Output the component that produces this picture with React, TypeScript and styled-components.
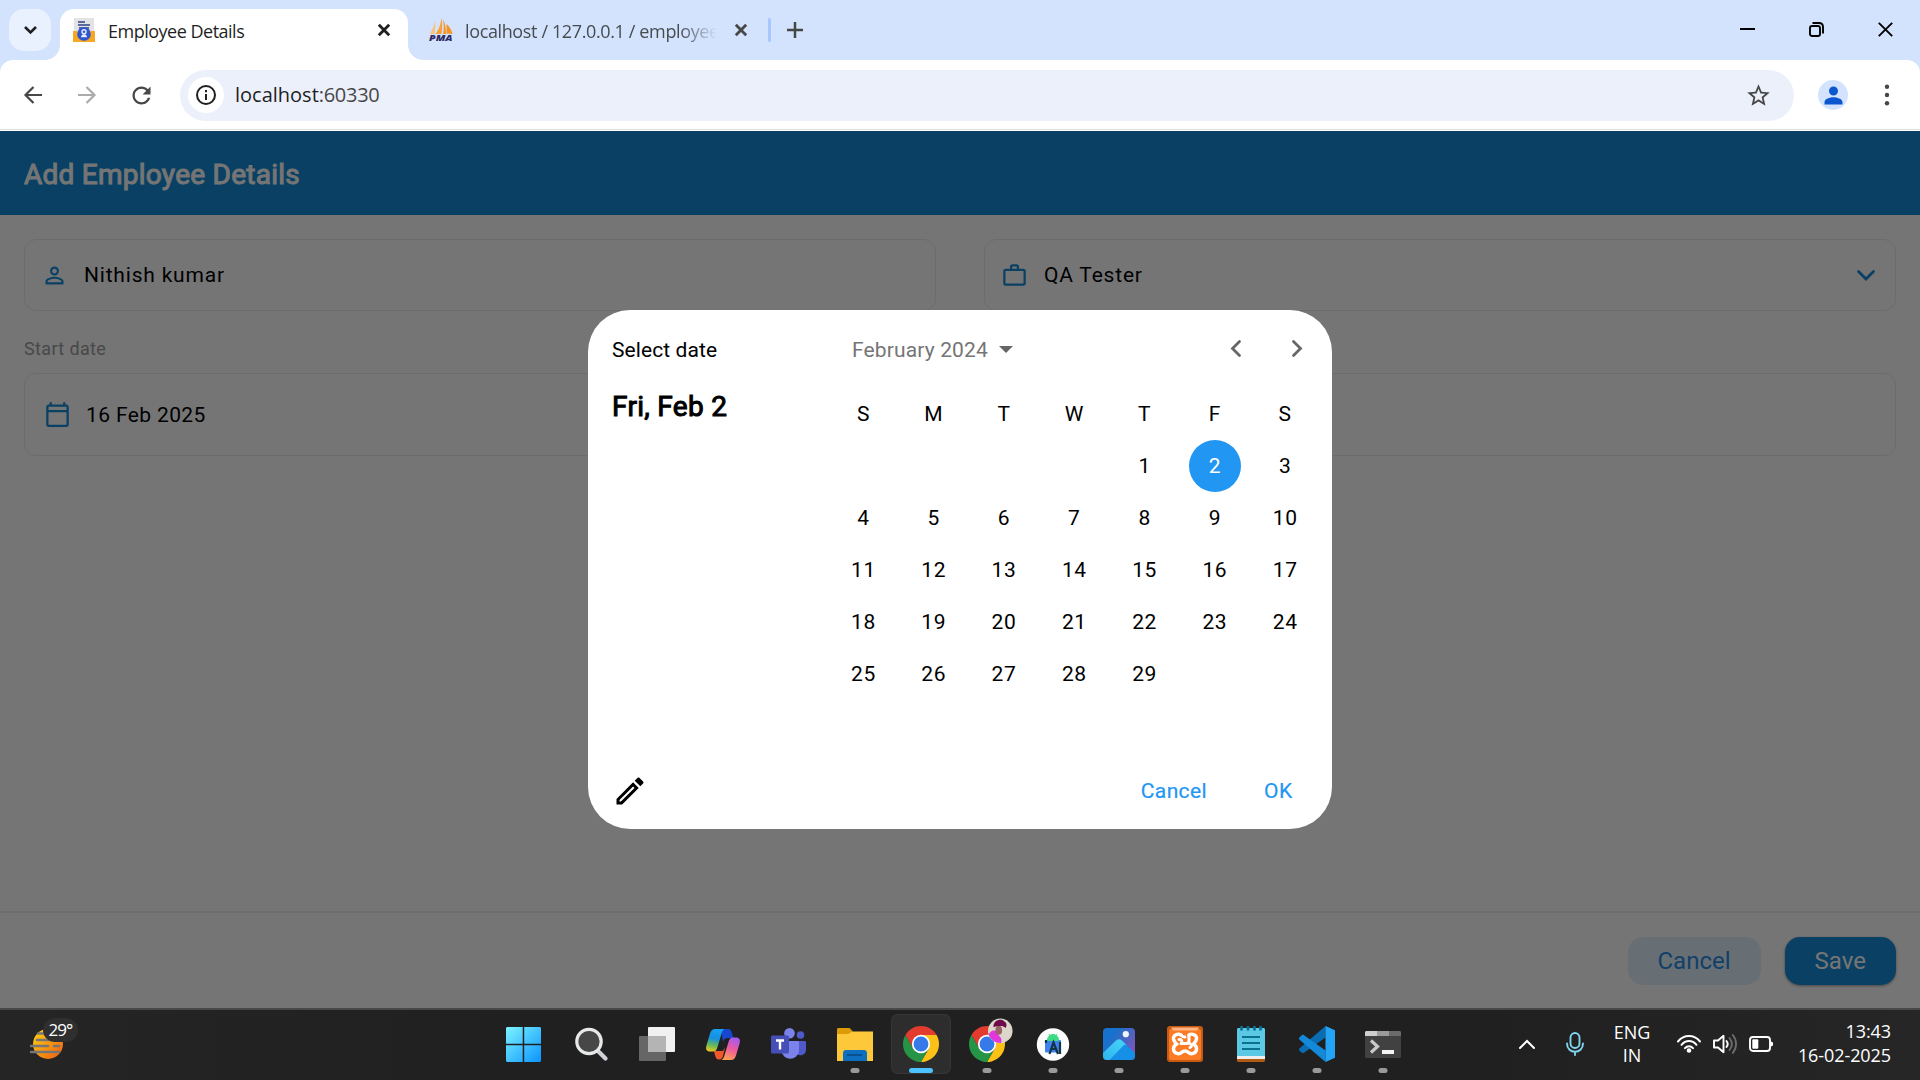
import React from 'react';
import styled, { createGlobalStyle, css } from 'styled-components';

const GlobalStyle = createGlobalStyle`
  *, *::before, *::after { box-sizing: border-box; }
  body { margin: 0; background: #fff; overflow: hidden; }
  svg { display: block; flex: none; overflow: visible; }
  button { border: 0; padding: 0; margin: 0; background: none; font: inherit; color: inherit; }
`;

const uiFont = '"Open Sans", "Noto Sans", sans-serif';
const appFont = 'Roboto, "Liberation Sans", sans-serif';

const Screen = styled.div`
  width: 1920px;
  height: 1080px;
  display: flex;
  flex-direction: column;
  overflow: hidden;
`;

/* ---------- browser chrome ---------- */

const TabStrip = styled.header`
  height: 60px;
  display: flex;
  background: #d3e3fd;
  font: 18px/26px ${uiFont};
  color: #1f1f1f;
`;

const TabSearch = styled.button`
  width: 42px;
  height: 42px;
  margin: 9px 9px 0;
  border-radius: 15px;
  background: #eaf1fe;
  display: grid;
  place-items: center;
`;

const Tab = styled.div<{ $active?: boolean }>`
  position: relative;
  height: 51px;
  margin-top: 9px;
  display: flex;
  align-items: flex-start;
  ${(p) =>
    p.$active
      ? css`
          width: 348px;
          padding: 9px 18px 0 13px;
          background: #fff;
          border-radius: 14px 14px 0 0;
          &::before,
          &::after {
            content: '';
            position: absolute;
            bottom: 0;
            width: 15px;
            height: 15px;
          }
          &::before {
            left: -15px;
            background: radial-gradient(circle at 0 0, transparent 14.5px, #fff 15.2px);
          }
          &::after {
            right: -15px;
            background: radial-gradient(circle at 100% 0, transparent 14.5px, #fff 15.2px);
          }
        `
      : css`
          width: 360px;
          padding: 9px 21px 0 21px;
          color: #474b50;
        `}
`;

const TabTitle = styled.span<{ $fade?: boolean }>`
  flex: 1;
  margin-left: ${(p) => (p.$fade ? 12 : 13)}px;
  overflow: hidden;
  white-space: nowrap;
  letter-spacing: ${(p) => (p.$fade ? '-0.37px' : '-0.5px')};
  ${(p) =>
    p.$fade &&
    css`
      margin-right: 18px;
      mask-image: linear-gradient(to right, #000 85%, transparent 100%);
    `}
`;

const TabClose = styled.button`
  height: 24px;
  display: grid;
  place-items: center;
`;

const TabDivider = styled.i`
  width: 3px;
  height: 24px;
  margin-top: 18px;
  border-radius: 2px;
  background: #a8c7fa;
`;

const NewTab = styled.button`
  margin: 18px 0 0 16px;
  height: 24px;
  display: grid;
  place-items: center;
`;

const WindowButtons = styled.div`
  margin-left: auto;
  height: 59px;
  padding-right: 27px;
  display: flex;
  align-items: center;
  gap: 54px;
`;

const ToolbarBack = styled.div`
  background: #d3e3fd;
`;

const Toolbar = styled.div`
  height: 71px;
  padding: 9px 30px 10px 24px;
  display: flex;
  align-items: center;
  background: #fff;
  border-radius: 13px 13px 0 0;
  box-shadow: inset 0 -1px #fff, inset 0 -2px #dde1e6;
`;

const NavButtons = styled.div`
  width: 156px;
  display: flex;
  align-items: center;
  gap: 36px;
  svg:last-child { margin-left: -4.5px; }
`;

const Omnibox = styled.div`
  flex: 1;
  height: 51px;
  margin-right: 24px;
  padding: 0 22.5px 0 8px;
  border-radius: 26px;
  background: #ecf0fa;
  display: flex;
  align-items: center;
`;

const SiteInfo = styled.span`
  width: 36px;
  height: 36px;
  border-radius: 50%;
  background: #fff;
  display: grid;
  place-items: center;
`;

const Url = styled.span`
  flex: 1;
  margin: -1px 0 0 11px;
  font: 20px/28px ${uiFont};
  color: #1f1f1f;
  span {
    color: #474747;
    letter-spacing: -0.3px;
  }
`;

const Profile = styled.span`
  width: 30px;
  height: 30px;
  margin-right: 37px;
  border-radius: 50%;
  background: #d3e3fd;
  display: grid;
  place-items: center;
`;

/* ---------- page ---------- */

const Page = styled.main`
  position: relative;
  height: 877px;
  display: flex;
  flex-direction: column;
  background: #fff;
  font: 21px/30px ${appFont};
  color: #000;
`;

const AppBar = styled.div`
  height: 84px;
  padding: 3px 24px 0;
  display: flex;
  align-items: center;
  background: #158dd7;
  color: #fff;
  font-size: 28px;
  letter-spacing: 0.25px;
  -webkit-text-stroke: 1px currentColor;
`;

const Form = styled.div`
  flex: 1;
  padding: 24px;
`;

const FieldRow = styled.div`
  display: grid;
  grid-template-columns: 1fr 1fr;
  gap: 48px;
`;

const Field = styled.div<{ $tall?: boolean }>`
  height: ${(p) => (p.$tall ? 83 : 72)}px;
  padding: 0 20px 0 ${(p) => (p.$tall ? 18.5 : 15.5)}px;
  border: 1.5px solid #ebebeb;
  border-radius: 12px;
  display: flex;
  align-items: center;
  gap: ${(p) => (p.$tall ? 15.5 : 16.5)}px;
  letter-spacing: ${(p) => (p.$tall ? 0.38 : 0.8)}px;
  svg:last-child:not(:first-child) { margin-left: auto; }
`;

const FieldLabel = styled.div`
  height: 62px;
  padding-top: 23px;
  font-size: 18px;
  letter-spacing: 0.36px;
  color: #9e9e9e;
`;

const Footer = styled.footer`
  height: 97px;
  padding: 24px 24px 0;
  border-top: 2px solid #efefef;
  display: flex;
  justify-content: flex-end;
  gap: 24px;
`;

const FooterButton = styled.button<{ $primary?: boolean }>`
  width: ${(p) => (p.$primary ? 111.5 : 133)}px;
  height: 48px;
  border-radius: 15px;
  font-size: 24px;
  background: ${(p) => (p.$primary ? '#158dd7' : '#e3f2fd')};
  color: ${(p) => (p.$primary ? '#fff' : '#2a8be4')};
  box-shadow: ${(p) => (p.$primary ? '0 1px 3px rgba(0,0,0,.4)' : 'none')};
`;

const Scrim = styled.div`
  position: absolute;
  inset: 0;
  padding-top: 0.5px;
  display: flex;
  align-items: center;
  justify-content: center;
  background: rgba(0, 0, 0, 0.54);
`;

/* ---------- date picker ---------- */

const Dialog = styled.section`
  width: 744px;
  height: 519px;
  display: flex;
  border-radius: 42px;
  background: #fff;
`;

const Summary = styled.div`
  width: 228px;
  padding: 25px 24px 20px;
  display: flex;
  flex-direction: column;
  letter-spacing: 0.1px;
  svg { margin-top: auto; }
`;

const Headline = styled.span`
  margin-top: 24px;
  font-size: 28px;
  line-height: 36px;
  letter-spacing: 0.3px;
  -webkit-text-stroke: 1px currentColor;
`;

const Picker = styled.div`
  flex: 1;
  padding: 0 12px;
  display: flex;
  flex-direction: column;
`;

const MonthBar = styled.div`
  height: 78px;
  padding: 1px 18.5px 0 24px;
  display: flex;
  align-items: center;
  color: #757575;
  letter-spacing: 0.14px;
`;

const DropArrow = styled.i`
  margin: 0 auto 0 11px;
  border: 7.5px solid transparent;
  border-top-color: #666;
  border-bottom: 0;
`;

const MonthNav = styled.div`
  display: flex;
  gap: 50.5px;
  margin-top: -2px;
`;

const DayGrid = styled.div`
  display: grid;
  grid-template-columns: repeat(7, 1fr);
  grid-auto-rows: 51.9px;
  justify-items: center;
`;

const Day = styled.span<{ $selected?: boolean }>`
  width: 52px;
  height: 52px;
  border-radius: 50%;
  line-height: 52px;
  text-align: center;
  letter-spacing: 0.6px;
  text-indent: 0.6px;
  background: ${(p) => (p.$selected ? '#2196f3' : 'transparent')};
  color: ${(p) => (p.$selected ? '#fff' : '#000')};
`;

const Actions = styled.div`
  height: 76px;
  margin-top: auto;
  padding-right: 27.5px;
  display: flex;
  align-items: center;
  justify-content: flex-end;
  gap: 57px;
  color: #2196f3;
  button {
    letter-spacing: 0.4px;
    -webkit-text-stroke: 0.2px currentColor;
  }
`;

/* ---------- taskbar ---------- */

const Taskbar = styled.nav`
  height: 72px;
  border-top: 2px solid #484848;
  display: grid;
  grid-template-columns: 493.5px auto 1fr;
  background: linear-gradient(90deg, #252525, #202020 26%, #202020 78%, #262626);
  color: #fff;
  font: 18px/24px ${uiFont};
`;

const Weather = styled.div`
  display: flex;
  align-items: flex-start;
  padding: 8px 0 0 30px;
  svg { margin-top: 12px; }
`;

const Temperature = styled.span`
  width: 35px;
  height: 24px;
  margin-left: -20px;
  border-radius: 12px;
  background: #2f2f2f;
  font-size: 17px;
  line-height: 23px;
  text-align: center;
  letter-spacing: -0.9px;
  z-index: 1;
`;

const Apps = styled.div`
  padding-top: 4px;
  display: flex;
  gap: 6px;
`;

const AppButton = styled.button<{ $state?: 'active' | 'open'; $first?: boolean }>`
  position: relative;
  width: 60px;
  height: 60px;
  margin-right: ${(p) => (p.$first ? 1.5 : 0)}px;
  border-radius: 7px;
  display: grid;
  place-items: center;
  ${(p) =>
    p.$state === 'active' &&
    css`
      background: #2d2d2d;
      box-shadow: inset 0 0 0 1px #363636;
    `}
  &::after {
    content: '';
    position: absolute;
    bottom: 1px;
    left: 50%;
    transform: translateX(-50%);
    display: ${(p) => (p.$state ? 'block' : 'none')};
    width: ${(p) => (p.$state === 'active' ? 24 : 9)}px;
    height: 5px;
    border-radius: 3px;
    background: ${(p) => (p.$state === 'active' ? '#4cc2ff' : '#9a9a9a')};
  }
`;

const Tray = styled.div`
  display: flex;
  justify-content: flex-end;
  align-items: flex-start;
  padding: 22px 29px 0 0;
`;

const TrayIcons = styled.div<{ $gap: number; $end: number }>`
  display: flex;
  gap: ${(p) => p.$gap}px;
  margin-right: ${(p) => p.$end}px;
`;

const TrayText = styled.div<{ $clock?: boolean }>`
  width: ${(p) => (p.$clock ? 100 : 40)}px;
  margin: ${(p) => (p.$clock ? '-13px 0 0' : '-11px 25px 0 0')};
  text-align: ${(p) => (p.$clock ? 'right' : 'center')};
  line-height: ${(p) => (p.$clock ? 24 : 23)}px;
  letter-spacing: ${(p) => (p.$clock ? -0.08 : -0.1)}px;
`;

/* ---------- icons ---------- */

const Cross = ({ size = 12, w = 2.8, color = '#1f1f1f' }) => (
  <svg width={size} height={size} viewBox={`0 0 ${size} ${size}`} stroke={color} strokeWidth={w}>
    <path d={`M.8.8l${size - 1.6} ${size - 1.6}M${size - 0.8}.8L.8 ${size - 0.8}`} />
  </svg>
);

const MaterialIcon = ({ d, size = 27, color = '#158dd7' }: { d: string; size?: number; color?: string }) => (
  <svg width={size} height={size} viewBox="0 0 24 24" fill={color}>
    <path d={d} />
  </svg>
);

const paths = {
  person:
    'M12 5.9c1.16 0 2.1.94 2.1 2.1s-.94 2.1-2.1 2.1S9.9 9.16 9.9 8s.94-2.1 2.1-2.1m0 9c2.97 0 6.1 1.46 6.1 2.1v1.1H5.9V17c0-.64 3.13-2.1 6.1-2.1M12 4C9.79 4 8 5.79 8 8s1.79 4 4 4 4-1.79 4-4-1.79-4-4-4zm0 9c-2.67 0-8 1.34-8 4v3h16v-3c0-2.66-5.33-4-8-4z',
  work: 'M14 6V4h-4v2h4zM4 8v11h16V8H4zm16-2c1.11 0 2 .89 2 2v11c0 1.11-.89 2-2 2H4c-1.11 0-2-.89-2-2l.01-11c0-1.11.88-2 1.99-2h4V4c0-1.11.89-2 2-2h4c1.11 0 2 .89 2 2v2h4z',
  calendar:
    'M20 3h-1V1h-2v2H7V1H5v2H4c-1.1 0-2 .9-2 2v16c0 1.1.9 2 2 2h16c1.1 0 2-.9 2-2V5c0-1.1-.9-2-2-2zm0 18H4V10h16v11zm0-13H4V5h16v3z',
  edit: 'M14.06 9.02l.92.92L5.92 19H5v-.92l9.06-9.06M17.66 3c-.25 0-.51.1-.7.29l-1.83 1.83 3.75 3.75 1.83-1.83c.39-.39.39-1.02 0-1.41l-2.34-2.34c-.2-.2-.45-.29-.71-.29zm-3.6 3.19L3 17.25V21h3.75L17.81 9.94l-3.75-3.75z',
  star: 'M22 9.24l-7.19-.62L12 2 9.19 8.63 2 9.24l5.46 4.73L5.82 21 12 17.27 18.18 21l-1.63-7.03L22 9.24zM12 15.4l-3.76 2.27 1-4.28-3.32-2.88 4.38-.38L12 6.1l1.71 4.04 4.38.38-3.32 2.88 1 4.28L12 15.4z',
  reload:
    'M17.65 6.35C16.2 4.9 14.21 4 12 4c-4.42 0-7.99 3.58-7.99 8s3.57 8 7.99 8c3.73 0 6.84-2.55 7.73-6h-2.08c-.82 2.33-3.04 4-5.65 4-3.31 0-6-2.69-6-6s2.69-6 6-6c1.66 0 3.14.69 4.22 1.78L13 11h7V4l-2.35 2.35z',
  user: 'M12 12c2.21 0 4-1.79 4-4s-1.79-4-4-4-4 1.79-4 4 1.79 4 4 4zm0 1.6c-3 0-8 1.3-8 4.4v2h16v-2c0-3.1-5-4.4-8-4.4z',
};

const Arrow = ({ back, color }: { back?: boolean; color: string }) => (
  <svg width="18" height="18" viewBox="0 0 18 18" fill="none" stroke={color} strokeWidth="2.200">
    <path d={back ? 'M18 9H2M9.5 1L1.5 9l8 8' : 'M0 9h16M8.5 1l8 8-8 8'} />
  </svg>
);

const EmployeeFavicon = () => (
  <svg width="22" height="24" viewBox="0 0 22 24">
    <path d="M1 0h20v14H1z" fill="#e3e3e6" />
    <path d="M5 4h7M5 7h12M6 10h10" stroke="#5b6b9c" strokeWidth="1.800" />
    <path d="M0 13h4l2 2h10l2-2h4v11H0z" fill="#f6a723" />
    <circle cx="11" cy="16" r="6.800" fill="#2c55d0" />
    <circle cx="11" cy="13.800" r="2" fill="none" stroke="#e6edff" strokeWidth="1.400" />
    <path d="M8 19.200c0-4 6-4 6 0z" fill="#e6edff" />
  </svg>
);

const PmaFavicon = () => (
  <svg width="24" height="24" viewBox="0 0 24 24">
    <path d="M6 3C5 8 3 12 1 16h4.500C6.500 11 6.500 7 6 3z" fill="#fbc27a" />
    <path d="M12.500 0C11.500 7 9.500 12 6.500 16h6C13.500 10 13.500 5 12.500 0z" fill="#f9a23c" />
    <path d="M14 1c1 5 1 10 .2 15H17C17 10 16 5 14 1z" fill="#f7931e" />
    <path d="M17.500 6c0 4 .2 6 0 9.500L23.500 16c-1-4-3-7.500-6-10z" fill="#f7931e" />
    <text x="0" y="23" fontFamily="Open Sans, sans-serif" fontSize="8.600" fontWeight="800" fontStyle="italic" fill="#2f2a63" textLength="23.500" lengthAdjust="spacingAndGlyphs">PMA</text>
  </svg>
);

const Chevron = ({ d, w = 18, h = 18, color = '#666', sw = 2.8 }: { d: string; w?: number; h?: number; color?: string; sw?: number }) => (
  <svg width={w} height={h} viewBox={`0 0 ${w} ${h}`} fill="none" stroke={color} strokeWidth={sw} strokeLinecap="round" strokeLinejoin="miter">
    <path d={d} />
  </svg>
);

const WindowsLogo = () => (
  <svg width="35" height="35" viewBox="0 0 35 35">
    <defs>
      <linearGradient id="win" gradientUnits="userSpaceOnUse" x1="0" y1="0" x2="35" y2="35">
        <stop offset="0" stopColor="#7df4ff" />
        <stop offset="1" stopColor="#0a94ff" />
      </linearGradient>
    </defs>
    <path fill="url(#win)" d="M1 0h15.700v16.700H0V1zM18.200 0H34l1 1v15.700H18.200zM0 18.200h16.700V35H1l-1-1zM18.200 18.200H35V34l-1 1H18.200z" />
  </svg>
);

const SearchLogo = () => (
  <svg width="34" height="34" viewBox="0 0 34 34">
    <path d="M23.500 23.500l8 8" stroke="#cfd3d8" strokeWidth="4.200" strokeLinecap="round" />
    <circle cx="15" cy="14.500" r="12.200" fill="#474747" stroke="#e6e8ea" strokeWidth="3.200" />
  </svg>
);

const TaskViewLogo = () => (
  <svg width="36" height="34" viewBox="0 0 36 34">
    <rect x="9" y="0" width="27" height="25" rx="1" fill="#f1f1f1" />
    <rect x="0" y="9" width="27" height="25" rx="1" fill="#666" />
    <path d="M9 9h18v16H9z" fill="#b4b4b4" />
  </svg>
);

const CopilotLogo = () => (
  <svg width="34" height="31" viewBox="0 0 34 31">
    <defs>
      <linearGradient id="cpA" x1=".4" y1="0" x2=".2" y2="1">
        <stop offset="0" stopColor="#1a9ff0" />
        <stop offset=".4" stopColor="#1690e0" />
        <stop offset=".7" stopColor="#62b85c" />
        <stop offset="1" stopColor="#f4c81c" />
      </linearGradient>
      <linearGradient id="cpB" x1=".7" y1="0" x2=".4" y2="1">
        <stop offset="0" stopColor="#a45af0" />
        <stop offset=".5" stopColor="#ee5aa0" />
        <stop offset="1" stopColor="#ffa050" />
      </linearGradient>
    </defs>
    <path d="M15 0h7c2 0 3 1 3.600 3L27.500 9H22c-3 0-4 1-5 4z" fill="#1747cf" />
    <path d="M8 22h9l2-4-2 9c-.6 2-1.400 3.500-4 3.500-3 0-3.500-2-5-8.500z" fill="#f0582c" />
    <path d="M9 0h11c-3 0-3.600 2-4.400 4.500L11.500 18c-.9 3-2 4.500-4.500 4.500H4C.5 22.500-.5 20 .3 17L4 4.500C5 1.500 6.500 0 9 0z" fill="url(#cpA)" />
    <path d="M25 31H14c3 0 3.600-2 4.400-4.500L22.500 13c.9-3 2-4.500 4.500-4.500h3c3.500 0 4.500 2.500 3.700 5.500L30 26.500c-1 3-2.500 4.500-5 4.500z" fill="url(#cpB)" />
  </svg>
);

const TeamsLogo = () => (
  <svg width="36" height="32" viewBox="0 0 36 32">
    <circle cx="29.500" cy="7" r="3.800" fill="#5059c9" />
    <path d="M26 13h7.500c1 0 1.500.6 1.500 1.500V22a5.500 5.500 0 0 1-9 4z" fill="#5059c9" />
    <circle cx="18.500" cy="5.300" r="5.300" fill="#7b83eb" />
    <path d="M11 13h15.500c1 0 1.500.6 1.500 1.500V23a8.800 8.800 0 0 1-17.500 0z" fill="#7b83eb" />
    <rect x="0" y="7.500" width="18" height="18" rx="1.500" fill="#464eb8" />
    <path d="M5 12.500h8M9 12.500V21.500" stroke="#fff" strokeWidth="2.400" />
  </svg>
);

const FolderLogo = () => (
  <svg width="36" height="33" viewBox="0 0 36 33">
    <path d="M0 1l1-1h11.500l3 3v5H0z" fill="#dc9a06" />
    <path d="M0 6h11l4.500-2.500H36V33H0z" fill="#fdc93a" />
    <path d="M6 33v-8c0-2 1.200-3 3-3h18c1.800 0 3 1 3 3v8z" fill="#0d6fc0" />
    <path d="M10 27h15" stroke="#0a4a86" strokeWidth="1.600" />
  </svg>
);

const ChromeLogo = ({ avatar }: { avatar?: boolean }) => (
  <svg width="36" height="36" viewBox="-24 -24 48 48">
    <path d="M-20.780-12A24 24 0 0 1 20.780-12L0-12-10.390 6z" fill="#e33b2e" />
    <path d="M20.780-12A24 24 0 0 1 0 24L10.390 6 0-12z" fill="#fbc116" />
    <path d="M0 24A24 24 0 0 1-20.780-12L-10.390 6 10.390 6z" fill="#269446" />
    <circle r="12.200" fill="#fff" />
    <circle r="9.900" fill="#357ae8" />
    {avatar && (
      <g transform="translate(17.700 -17.500)">
        <circle r="16.400" fill="#ddd6cb" />
        <path d="M-15.500 5.300C-12-2-6-2-3 4s6 4 4 12.100A16.400 16.400 0 0 1-15.500 5.300z" fill="#e336dc" />
        <ellipse cx="-2" cy="-1" rx="4.500" ry="6" fill="#9b6468" />
        <path d="M-9-5C-10-14 1-17 5-13c4 2 4 6 2 9-3-3-8-3-16-1z" fill="#6d0a4c" />
      </g>
    )}
  </svg>
);

const AndroidStudioLogo = () => (
  <svg width="32" height="33" viewBox="0 0 32 33">
    <circle cx="16" cy="16.500" r="16.200" fill="#fdfdfd" />
    <rect x="8" y="12" width="16" height="12.500" rx="1" fill="#3f82ee" />
    <path d="M10.500 12.500c0-8 11-8 11 0zM12 6l1.500 2.500M20 6l-1.500 2.500" fill="#3ddc84" stroke="#3ddc84" />
    <path d="M12.500 26l4-11.500 4.500 11.500M14 21h5M23 14v12M9 12v3" fill="none" stroke="#143446" strokeWidth="2.200" />
  </svg>
);

const PhotosLogo = () => (
  <svg width="32" height="32" viewBox="0 0 32 32">
    <defs>
      <linearGradient id="ph" x1="0" y1="0" x2="1" y2=".7">
        <stop offset=".3" stopColor="#1672cc" />
        <stop offset="1" stopColor="#7f55b8" />
      </linearGradient>
      <linearGradient id="mt" x1="0" y1="1" x2="1" y2="0">
        <stop offset="0" stopColor="#2fb4ee" />
        <stop offset="1" stopColor="#45d6f8" />
      </linearGradient>
      <clipPath id="phc"><rect width="32" height="32" rx="4" /></clipPath>
    </defs>
    <g clipPath="url(#phc)">
      <path d="M0 0h32v32H0z" fill="url(#ph)" />
      <path d="M6 32l14-14.500c1.300-1.300 2.700-1.300 4 0L34 27v5z" fill="#1590e6" />
      <path d="M0 25l13-12.500c2-1.800 4-1.800 6 0l5 5c-1.300-.9-2.700-.9-4 .4L6.500 32H0z" fill="url(#mt)" />
    </g>
    <circle cx="22.800" cy="6.200" r="3.100" fill="#eef4fb" />
  </svg>
);

const XamppLogo = () => (
  <svg width="36" height="36" viewBox="0 0 36 36">
    <rect width="36" height="36" rx="3" fill="#c75a12" />
    <rect x="2" y="3" width="32" height="31" rx="2" fill="#fb7a24" />
    <path d="M4 1.500h28l-2 3H6z" fill="#ffb483" />
    <path
      d="M14 9c-3-2-8 0-7.500 4 .2 2 1.500 3.500 3 5-1.500 1-3.300 3-3 5.500.5 4 5.500 5.500 8 3 1-1 2-1.500 3.500-1.500s2.500.5 3.500 1.500c2.500 2.500 7.500 1 8-3 .3-2.500-1.500-4.500-3-5.500 1.500-1.500 2.800-3 3-5C30 9 25 7 22 9"
      fill="none" stroke="#fff" strokeWidth="3.400" strokeLinecap="round"
    />
    <path d="M14 9c1 1.500 2 2 4 2M22 9v5.500c0 2-1 3-3 3h-5M12 13.500c2-.5 3.500 1 2.500 4M23 17.500c2 1 2 3 0 4" fill="none" stroke="#fff" strokeWidth="3" strokeLinecap="round" />
  </svg>
);

const NotepadLogo = () => (
  <svg width="28" height="36" viewBox="0 0 28 36">
    <path d="M0 31h28v4l-1 1H1l-1-1z" fill="#b35a12" />
    <path d="M0 28h28v5H0z" fill="#eee" />
    <path d="M0 3l1-1h26l1 1v27H0z" fill="#5cc9e4" />
    <path d="M5 11h18M5 17h18M5 23h18" stroke="#0b6f92" strokeWidth="1.900" />
    <path d="M4.500 0v4.500M11 0v4.500M17.500 0v4.500M23.500 0v4.500" stroke="#0b6f92" strokeWidth="2.600" />
  </svg>
);

const CodeLogo = () => (
  <svg width="36" height="36" viewBox="0 0 36 36">
    <path d="M26.500 0v11.500L5 26.800c-.8.600-1.600.600-2.300 0L.6 24.800c-.8-.8-.8-1.800 0-2.600z" fill="#0a6cb2" />
    <path d="M26.500 36V24.500L5 9.200c-.8-.6-1.600-.6-2.300 0L.6 11.200c-.8.8-.8 1.800 0 2.600z" fill="#128ad9" />
    <path d="M26.500 0L36 4.200v27.600L26.500 36z" fill="#25a4f4" />
  </svg>
);

const TerminalLogo = () => (
  <svg width="36" height="27" viewBox="0 0 36 27">
    <rect width="36" height="27" rx="1.500" fill="#414141" />
    <path d="M0 5V1l1-1h11v5z" fill="#cfcfcf" />
    <path d="M12 0h12v5H12z" fill="#9b9b9b" />
    <path d="M24 0h11l1 1v4H24z" fill="#6b6b6b" />
    <path d="M6 9.500l6.500 6-6.500 6" fill="none" stroke="#c9c9c9" strokeWidth="3.200" />
    <path d="M17 21h12" stroke="#f4f4f4" strokeWidth="4" />
  </svg>
);

const SunLogo = () => (
  <svg width="33" height="29" viewBox="0 0 33 29">
    <defs>
      <linearGradient id="sun" x1="0" y1="0" x2="1" y2="1">
        <stop offset=".1" stopColor="#fccb12" />
        <stop offset="1" stopColor="#ee5a12" />
      </linearGradient>
    </defs>
    <circle cx="18" cy="14" r="15" fill="url(#sun)" />
    <path d="M8 3.500h8M7 10h12M1 16h17M24 16h5M1 22h28" stroke="#767676" strokeWidth="2.400" strokeLinecap="round" />
  </svg>
);

const apps: { icon: React.ReactNode; state?: 'active' | 'open' }[] = [
  { icon: <WindowsLogo /> },
  { icon: <SearchLogo /> },
  { icon: <TaskViewLogo /> },
  { icon: <CopilotLogo /> },
  { icon: <TeamsLogo /> },
  { icon: <FolderLogo />, state: 'open' },
  { icon: <ChromeLogo />, state: 'active' },
  { icon: <ChromeLogo avatar />, state: 'open' },
  { icon: <AndroidStudioLogo />, state: 'open' },
  { icon: <PhotosLogo />, state: 'open' },
  { icon: <XamppLogo />, state: 'open' },
  { icon: <NotepadLogo />, state: 'open' },
  { icon: <CodeLogo />, state: 'open' },
  { icon: <TerminalLogo />, state: 'open' },
];

const weekdays = ['S', 'M', 'T', 'W', 'T', 'F', 'S'];
const leadingBlanks = 4;
const days = Array.from({ length: 29 }, (_, i) => i + 1);

const Browser = () => (
  <>
    <TabStrip>
      <TabSearch>
        <svg width="13" height="8" viewBox="0 0 13 8" fill="none" stroke="#1f1f1f" strokeWidth="2.600">
          <path d="M1 1l5.500 5.500L12 1" />
        </svg>
      </TabSearch>
      <Tab $active>
        <EmployeeFavicon />
        <TabTitle>Employee Details</TabTitle>
        <TabClose><Cross /></TabClose>
      </Tab>
      <Tab>
        <PmaFavicon />
        <TabTitle $fade>localhost / 127.0.0.1 / employee</TabTitle>
        <TabClose><Cross color="#474747" /></TabClose>
      </Tab>
      <TabDivider />
      <NewTab>
        <svg width="16" height="16" viewBox="0 0 16 16" stroke="#444746" strokeWidth="2.500">
          <path d="M0 8h16M8 0v16" />
        </svg>
      </NewTab>
      <WindowButtons>
        <svg width="15" height="15" viewBox="0 0 15 15"><path d="M0 6h15v2H0z" /></svg>
        <svg width="15" height="15" viewBox="0 0 15 15" fill="none" stroke="#000" strokeWidth="1.900">
          <rect x="1" y="4" width="10" height="10" rx="2" />
          <path d="M3.500 1H10q4 0 4 4v6.500" />
        </svg>
        <Cross size={15} w={1.9} color="#000" />
      </WindowButtons>
    </TabStrip>
    <ToolbarBack>
      <Toolbar>
        <NavButtons>
          <Arrow back color="#474747" />
          <Arrow color="#ababab" />
          <MaterialIcon d={paths.reload} size={27} color="#474747" />
        </NavButtons>
        <Omnibox>
          <SiteInfo>
            <svg width="20" height="20" viewBox="0 0 20 20" fill="none" stroke="#1f1f1f" strokeWidth="2">
              <circle cx="10" cy="10" r="9" />
              <path d="M10 9v6M10 5v2.200" />
            </svg>
          </SiteInfo>
          <Url>localhost<span>:60330</span></Url>
          <MaterialIcon d={paths.star} size={27} color="#474747" />
        </Omnibox>
        <Profile><MaterialIcon d={paths.user} size={27} color="#0b57d0" /></Profile>
        <svg width="5" height="22" viewBox="0 0 5 22" fill="#474747">
          <circle cx="2" cy="2.700" r="2.200" />
          <circle cx="2" cy="11" r="2.200" />
          <circle cx="2" cy="19.300" r="2.200" />
        </svg>
      </Toolbar>
    </ToolbarBack>
  </>
);

const DatePicker = () => (
  <Scrim>
    <Dialog>
      <Summary>
        Select date
        <Headline>Fri, Feb 2</Headline>
        <MaterialIcon d={paths.edit} size={36} color="#000" />
      </Summary>
      <Picker>
        <MonthBar>
          February 2024
          <DropArrow />
          <MonthNav>
            <Chevron w={10} h={17} d="M8.500 1.500l-7 7 7 7" />
            <Chevron w={10} h={17} d="M1.500 1.500l7 7-7 7" />
          </MonthNav>
        </MonthBar>
        <DayGrid>
          {weekdays.map((d, i) => <Day key={`w${i}`}>{d}</Day>)}
          {Array.from({ length: leadingBlanks }, (_, i) => <Day key={`b${i}`} />)}
          {days.map((d) => <Day key={d} $selected={d === 2}>{d}</Day>)}
        </DayGrid>
        <Actions>
          <button>Cancel</button>
          <button>OK</button>
        </Actions>
      </Picker>
    </Dialog>
  </Scrim>
);

export default function App() {
  return (
    <Screen>
      <GlobalStyle />
      <Browser />
      <Page>
        <AppBar>Add Employee Details</AppBar>
        <Form>
          <FieldRow>
            <Field>
              <MaterialIcon d={paths.person} />
              Nithish kumar
            </Field>
            <Field>
              <MaterialIcon d={paths.work} />
              QA Tester
              <Chevron w={18} h={11} d="M1.500 1.500L9 9l7.500-7.500" color="#158dd7" />
            </Field>
          </FieldRow>
          <FieldLabel>Start date</FieldLabel>
          <FieldRow>
            <Field $tall>
              <MaterialIcon d={paths.calendar} />
              16 Feb 2025
            </Field>
            <Field $tall />
          </FieldRow>
        </Form>
        <Footer>
          <FooterButton>Cancel</FooterButton>
          <FooterButton $primary>Save</FooterButton>
        </Footer>
        <DatePicker />
      </Page>
      <Taskbar>
        <Weather>
          <SunLogo />
          <Temperature>29°</Temperature>
        </Weather>
        <Apps>
          {apps.map((a, i) => (
            <AppButton key={i} $state={a.state} $first={i === 0}>{a.icon}</AppButton>
          ))}
        </Apps>
        <Tray>
          <TrayIcons $gap={24.5} $end={25}>
            <svg width="24" height="24" viewBox="0 0 24 24" fill="none" stroke="#fff" strokeWidth="2" strokeLinecap="round">
              <path d="M5 16l7-7 7 7" />
            </svg>
            <svg width="24" height="24" viewBox="0 0 24 24" fill="none" stroke="#7fd4ee" strokeWidth="1.900" strokeLinecap="round">
              <rect x="7.500" y="1" width="9" height="15" rx="4.500" />
              <path d="M4 11.500c0 11 16 11 16 0M12 20v3" />
            </svg>
          </TrayIcons>
          <TrayText>ENG<br />IN</TrayText>
          <TrayIcons $gap={12} $end={18}>
            <svg width="24" height="24" viewBox="0 0 24 24" fill="none" stroke="#fff" strokeWidth="2" strokeLinecap="round">
              <path d="M1 9.500c6-7.300 16-7.300 22 0M4.500 12.800c4.300-5 10.700-5 15 0M8 16.200c2.300-2.700 5.700-2.700 8 0" />
              <circle cx="12" cy="18.500" r="1.300" fill="#fff" />
            </svg>
            <svg width="24" height="24" viewBox="0 0 24 24" fill="none" stroke="#fff" strokeWidth="1.900" strokeLinecap="round" strokeLinejoin="round">
              <path d="M1 8.500h4l5.500-4.700v16.400L5 15.500H1zM13.500 9c1.600 2 1.600 4 0 6" />
              <path d="M16.500 6c3.200 4 3.200 8 0 12M19.800 3c4.300 5.500 4.300 12.500 0 18" stroke="#6c6c6c" />
            </svg>
            <svg width="24" height="24" viewBox="0 0 24 24" fill="none" stroke="#fff" strokeWidth="1.900">
              <rect x="1" y="5" width="20" height="14" rx="3" />
              <rect x="3.300" y="7.300" width="6" height="9.400" rx="1" fill="#fff" stroke="none" />
              <path d="M22 9.500v5l2-1v-3z" fill="#fff" stroke="none" />
            </svg>
          </TrayIcons>
          <TrayText $clock>13:43<br />16-02-2025</TrayText>
        </Tray>
      </Taskbar>
    </Screen>
  );
}
